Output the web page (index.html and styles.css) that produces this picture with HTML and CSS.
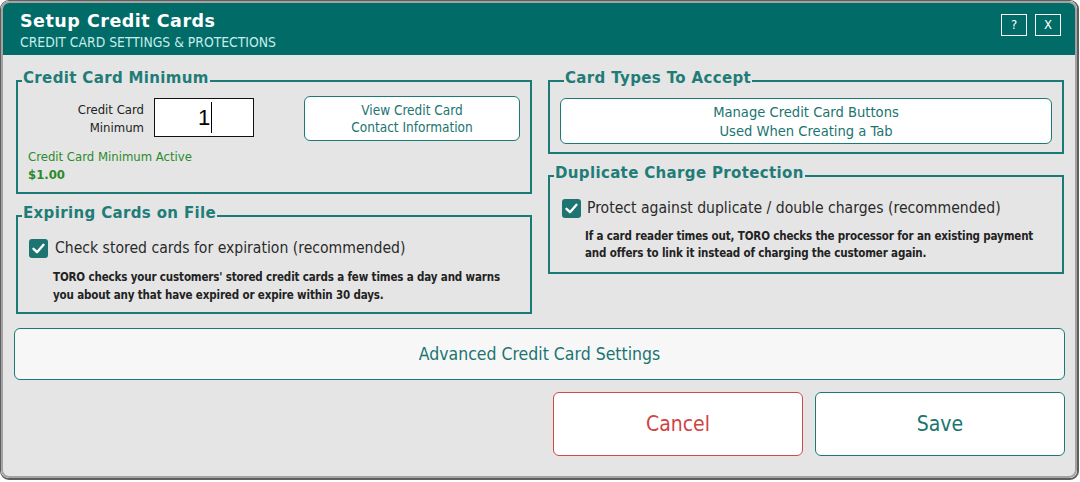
FILE: index.html
```html
<!DOCTYPE html>
<html lang="en">
<head>
<meta charset="utf-8">
<title>Setup Credit Cards</title>
<link rel="stylesheet" href="styles.css">
</head>
<body>
<div class="frame">
  <div class="window">
    <header class="titlebar">
      <div class="titles">
        <div class="title">Setup Credit Cards</div>
        <div class="subtitle">CREDIT CARD SETTINGS &amp; PROTECTIONS</div>
      </div>
      <div class="winbtns">
        <button class="winbtn">?</button>
        <button class="winbtn">X</button>
      </div>
    </header>
    <main class="content">
      <div class="columns">
        <div class="col">
          <fieldset class="group g-min">
            <legend>Credit Card Minimum</legend>
            <div class="min-row">
              <label class="min-label">Credit Card<br>Minimum</label>
              <div class="min-input"><span class="min-value">1</span><span class="caret"></span></div>
              <button class="btn btn-view">View Credit Card<br>Contact Information</button>
            </div>
            <div class="min-status">Credit Card Minimum Active</div>
            <div class="min-amount">$1.00</div>
          </fieldset>
          <fieldset class="group g-exp">
            <legend>Expiring Cards on File</legend>
            <div class="check-row">
              <span class="checkbox"><svg viewBox="0 0 19 19" width="19" height="19"><path d="M4.5 9.8 L8 13.2 L14.5 5.8" fill="none" stroke="#fff" stroke-width="2.4" stroke-linecap="round" stroke-linejoin="round"/></svg></span>
              <span class="check-label">Check stored cards for expiration (recommended)</span>
            </div>
            <p class="desc">TORO checks your customers' stored credit cards a few times a day and warns you about any that have expired or expire within 30 days.</p>
          </fieldset>
        </div>
        <div class="col">
          <fieldset class="group g-types">
            <legend>Card Types To Accept</legend>
            <button class="btn btn-manage">Manage Credit Card Buttons<br>Used When Creating a Tab</button>
          </fieldset>
          <fieldset class="group g-dup">
            <legend>Duplicate Charge Protection</legend>
            <div class="check-row">
              <span class="checkbox"><svg viewBox="0 0 19 19" width="19" height="19"><path d="M4.5 9.8 L8 13.2 L14.5 5.8" fill="none" stroke="#fff" stroke-width="2.4" stroke-linecap="round" stroke-linejoin="round"/></svg></span>
              <span class="check-label">Protect against duplicate / double charges (recommended)</span>
            </div>
            <p class="desc">If a card reader times out, TORO checks the processor for an existing payment and offers to link it instead of charging the customer again.</p>
          </fieldset>
        </div>
      </div>
      <button class="btn btn-adv">Advanced Credit Card Settings</button>
      <div class="actions">
        <button class="btn btn-cancel">Cancel</button>
        <button class="btn btn-save">Save</button>
      </div>
    </main>
  </div>
</div>
</body>
</html>
```

FILE: styles.css
```css
* { box-sizing: border-box; }

html, body {
  margin: 0;
  padding: 0;
  background: #ffffff;
}

body {
  width: 1080px;
  height: 482px;
  font-family: "DejaVu Sans", "Noto Sans", sans-serif;
  font-stretch: condensed;
}

.frame {
  width: 1079px;
  height: 480px;
  border: 1px solid #5e5e5e;
  border-right-width: 2px;
  border-bottom-width: 2px;
  border-radius: 9px;
  overflow: hidden;
}

.window {
  width: 100%;
  height: 100%;
  border: 2px solid #a3a3a3;
  border-radius: 8px;
  background: #e5e5e5;
  display: flex;
  flex-direction: column;
  overflow: hidden;
}

/* ---------- title bar ---------- */
.titlebar {
  height: 52px;
  flex: none;
  background: #006b67;
  display: flex;
  justify-content: space-between;
  align-items: flex-start;
  padding: 8px 14px 0 17px;
}

.title {
  font-family: "DejaVu Sans", sans-serif;
  font-stretch: normal;
  font-weight: bold;
  font-size: 17.5px;
  letter-spacing: 0.5px;
  line-height: 20px;
  color: #ffffff;
}

.subtitle {
  margin-top: 3px;
  font-size: 13.8px;
  line-height: 16px;
  color: #c9ecea;
}

.winbtns {
  display: flex;
  gap: 8px;
  margin-top: 3px;
}

.winbtn {
  width: 26px;
  height: 22px;
  padding: 0;
  border: 1px solid #ffffff;
  background: transparent;
  color: #ffffff;
  font-family: "DejaVu Sans", sans-serif;
  font-stretch: condensed;
  font-size: 13px;
  line-height: 20px;
}

/* ---------- content ---------- */
.content {
  flex: 1;
  padding: 15px 10px 0 11px;
  display: flex;
  flex-direction: column;
}

.columns {
  display: grid;
  grid-template-columns: 516px 516px;
  column-gap: 16px;
  margin: 0 2px;
}

.col {
  display: flex;
  flex-direction: column;
  gap: 11px;
}

.group {
  margin: 0;
  padding: 0;
  min-width: 0;
  border: 2px solid #1b7a76;
}

.group legend {
  margin-left: 4px;
  padding: 0 1px 5px;
  font-family: "DejaVu Sans", sans-serif;
  font-stretch: normal;
  font-weight: bold;
  font-size: 15px;
  letter-spacing: 0.35px;
  line-height: 16px;
  color: #217c78;
}

.btn {
  font-family: "DejaVu Sans", sans-serif;
  font-stretch: condensed;
  background: #ffffff;
  border: 1px solid #1b7a76;
  border-radius: 6px;
  color: #1a7471;
  padding: 0;
  cursor: pointer;
}

/* credit card minimum */
.g-min { padding: 0 0 8px; }

.min-row {
  display: flex;
  align-items: flex-start;
  margin-top: 5px;
  height: 45px;
}

.min-label {
  width: 126px;
  margin-top: 5px;
  text-align: right;
  font-size: 13px;
  line-height: 18px;
  color: #222222;
}

.min-input {
  width: 100px;
  height: 39px;
  margin: 2px 0 0 10px;
  background: #ffffff;
  border: 1px solid #111111;
  display: flex;
  align-items: center;
  justify-content: center;
  padding-left: 2px;
  font-family: "Liberation Sans", Arial, sans-serif;
  font-size: 22px;
  color: #000000;
}

.caret {
  width: 1px;
  height: 31px;
  margin-left: 1px;
  background: #000000;
}

.btn-view {
  margin-left: auto;
  margin-right: 10px;
  width: 216px;
  height: 45px;
  font-size: 13.5px;
  line-height: 17px;
}

.min-status,
.min-amount {
  padding-left: 10px;
  font-size: 13px;
  line-height: 18px;
  color: #2c8a2c;
}

.min-status { margin-top: 7px; }
.min-amount { font-weight: bold; }

/* checkbox rows */
.check-row {
  display: flex;
  align-items: center;
  height: 20px;
}

.checkbox {
  width: 19px;
  height: 19px;
  border-radius: 3px;
  background: #1e7470;
  display: block;
  flex: none;
}

.checkbox svg { display: block; }

.check-label {
  font-size: 15.6px;
  line-height: 20px;
  color: #2a2a2a;
}

.desc {
  margin: 0;
  padding-left: 35px;
  padding-right: 6px;
  font-size: 11.5px;
  letter-spacing: -0.15px;
  line-height: 17.5px;
  font-weight: bold;
  color: #222222;
}

.g-exp { padding-bottom: 8px; }
.g-exp .check-row { margin-top: 12px; padding-left: 11px; gap: 7px; }
.g-exp .desc { margin-top: 11px; }

/* card types */
.g-types { padding: 7px 10px 8px; }

.btn-manage {
  width: 100%;
  height: 46px;
  font-size: 14.6px;
  line-height: 19px;
}

/* duplicate */
.g-dup { padding-bottom: 10px; }
.g-dup .check-row { margin-top: 12px; padding-left: 12px; gap: 6px; }
.g-dup .desc { margin-top: 10px; line-height: 17px; }

/* bottom buttons */
.btn-adv {
  margin-top: 14px;
  height: 52px;
  width: 100%;
  background: #f7f7f7;
  font-size: 17.5px;
}

.actions {
  margin-top: 12px;
  display: flex;
  justify-content: flex-end;
  gap: 12px;
}

.btn-cancel,
.btn-save {
  width: 250px;
  height: 64px;
  font-size: 21px;
}

.btn-cancel {
  border-color: #d24848;
  color: #cf4444;
}
```
